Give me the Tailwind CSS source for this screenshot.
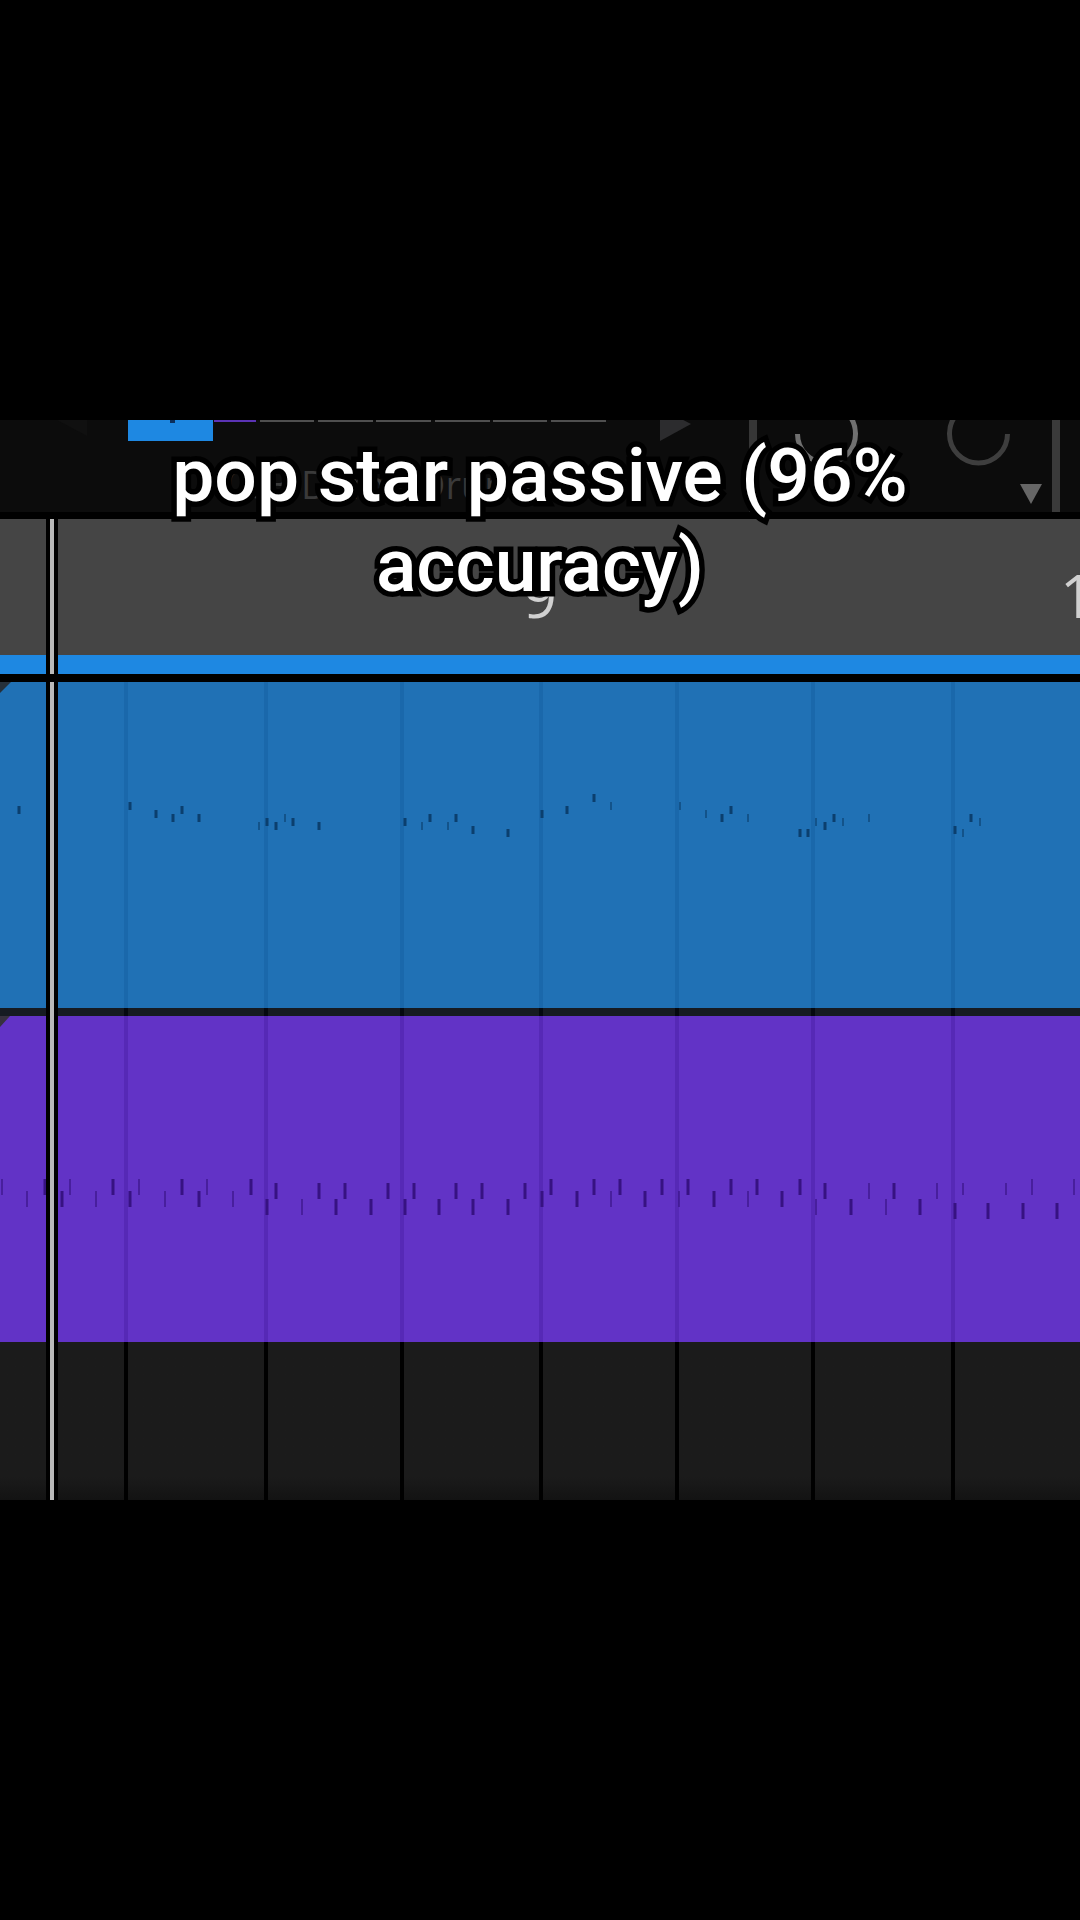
<!DOCTYPE html>
<html lang="en">
<head>
  <meta charset="UTF-8" />
  <meta name="viewport" content="width=device-width, initial-scale=1.0"/>
  <title>Sequencer</title>
  <script src="https://cdn.jsdelivr.net/npm/@tailwindcss/browser@4"></script>
</head>
<body class="bg-black font-['Roboto',sans-serif]">
  <main class="relative min-h-screen flex flex-col justify-center overflow-hidden">
    <section class="relative w-full">
      <!-- toolbar -->
      <header class="relative h-[92px] bg-[#0c0c0c] overflow-hidden">
        <svg class="w-full h-full" viewBox="0 0 1080 92" preserveAspectRatio="none">
          <path d="M87 -14 L57 0 L87 16 Z" fill="#101010" />
          <rect x="128" y="0" width="85" height="21" fill="#1e88e2" />
          <rect x="170" y="0" width="5" height="3" fill="#0b2f5c" />
          <rect x="214" y="0" width="42" height="2" fill="#5b33b5" />
          <g fill="#4f4f4f">
            <rect x="260" y="0" width="54" height="2" />
            <rect x="318" y="0" width="55" height="2" />
            <rect x="376" y="0" width="55" height="2" />
            <rect x="435" y="0" width="55" height="2" />
            <rect x="493" y="0" width="54" height="2" />
            <rect x="551" y="0" width="55" height="2" />
          </g>
          <path d="M660 -12 L691 4 L660 21 Z" fill="#2c2c2e" />
          <rect x="749" y="0" width="8" height="92" fill="#363636" />
          <path d="M797.500 14 A29 29 0 0 0 855.500 14 A29 29 0 0 0 847 -7" fill="none" stroke="#707070" stroke-width="5" />
          <path d="M1007.500 14 A29 29 0 0 1 949.500 14 A29 29 0 0 1 958 -7" fill="none" stroke="#3e3e3e" stroke-width="5" />
          <path d="M1020 64 H1042 L1031 84 Z" fill="#666666" />
          <rect x="1052" y="0" width="8" height="92" fill="#3a3a3a" />
        </svg>
        <p class="absolute left-[226px] top-[36px] text-[38px] text-[#3a3a3a] whitespace-nowrap font-['Open_Sans',sans-serif]">003 Demo Drums</p>
      </header>

      <!-- timeline ruler -->
      <div class="relative h-[143px] border-t-[7px] border-black bg-[#454545] overflow-hidden">
        <span class="absolute left-1/2 top-[46px] -translate-x-1/2 text-6xl text-[#d0d0d0] font-['Open_Sans',sans-serif]">9</span>
        <span class="absolute left-full top-[46px] -ml-5 text-6xl text-[#d0d0d0] font-['Open_Sans',sans-serif]">10</span>
      </div>
      <div class="h-[19px] bg-[#1e88e2]"></div>

      <!-- tracks -->
      <div class="bg-black pt-2">
        <svg class="block w-full h-[326px] bg-[#2071b5]" viewBox="0 0 1080 326" preserveAspectRatio="none">
          <g class="bars" fill="#1a68ab"></g>
          <path d="M0 0 H11 L0 11 Z" fill="#26303a" />
          <g id="lead" fill="#0b3f6e"></g>
        </svg>
        <svg class="block w-full h-2 bg-[#161b22]" viewBox="0 0 1080 8" preserveAspectRatio="none">
          <g class="bars" fill="#050910"></g>
        </svg>
        <svg class="block w-full h-[326px] bg-[#6233c6]" viewBox="0 0 1080 326" preserveAspectRatio="none">
          <g class="bars" fill="#5629b6"></g>
          <path d="M0 0 H10 L0 11 Z" fill="#37313f" />
          <g id="drums" fill="#371282"></g>
        </svg>
        <svg class="block w-full h-[158px] bg-linear-to-b from-[#1b1b1b] from-85% to-[#131313]" viewBox="0 0 1080 158" preserveAspectRatio="none">
          <g class="bars" fill="#000000"></g>
        </svg>
      </div>

      <!-- playhead -->
      <div class="absolute left-[46px] top-[99px] bottom-0 w-3 border-x-4 border-black bg-[#bababa]"></div>
      <div class="absolute left-[46px] top-[254px] h-2 w-3 bg-black"></div>
    </section>

    <!-- caption -->
    <h1 class="absolute inset-x-0 top-[430px] mx-auto max-w-[800px] text-center text-[75px] leading-[90px] font-medium text-white [-webkit-text-stroke:11px_black] [paint-order:stroke_fill] [stroke-linejoin:round]">pop star passive (96% accuracy)</h1>
  </main>

  <script>
    const bars = [126, 266, 402, 541, 677, 813, 953];

    // [y, height, x positions of strong notes, x positions of faint notes]
    const lead = [
      [112, 8, [594], []],
      [120, 8, [130], [611, 680]],
      [124, 8, [19, 182, 567, 731], []],
      [128, 8, [156, 542], [706]],
      [132, 8, [173, 199, 430, 456, 722, 834, 971], [285, 748, 869]],
      [136, 8, [267, 293, 405], [816, 843, 980]],
      [140, 8, [276, 319, 825], [259, 422, 448]],
      [144, 8, [473, 955], []],
      [147, 8, [508, 800, 808], [963]],
    ];
    const drums = [
      [163, 16, [45, 113, 182, 251, 551, 594, 620, 662, 688, 731, 757, 800], [2, 70, 139, 207, 1032, 1074]],
      [167, 12, [], [963, 1006]],
      [167, 16, [276, 319, 345, 388, 414, 456, 482, 525, 825, 894], [869, 937]],
      [175, 16, [62, 130, 199, 542, 577, 645, 714, 782], [27, 96, 165, 233, 611, 679, 748]],
      [183, 16, [267, 336, 371, 405, 439, 473, 508, 851, 920], [302, 816, 886]],
      [187, 16, [955, 988, 1023, 1057], []],
    ];

    function addRect(group, x, y, width, height) {
      const rect = document.createElementNS('http://www.w3.org/2000/svg', 'rect');
      rect.setAttribute('x', x - width / 2);
      rect.setAttribute('y', y);
      rect.setAttribute('width', width);
      rect.setAttribute('height', height);
      group.appendChild(rect);
      return rect;
    }

    function drawNotes(id, rows) {
      const group = document.getElementById(id);
      rows.forEach(([y, height, strong, faint]) => {
        strong.forEach(x => addRect(group, x, y, 3, height));
        faint.forEach(x => addRect(group, x, y, 2, height).setAttribute('opacity', '0.6'));
      });
    }

    document.querySelectorAll('.bars').forEach(group => {
      bars.forEach(x => addRect(group, x, 0, 4, 326));
    });
    drawNotes('lead', lead);
    drawNotes('drums', drums);
  </script>
</body>
</html>
